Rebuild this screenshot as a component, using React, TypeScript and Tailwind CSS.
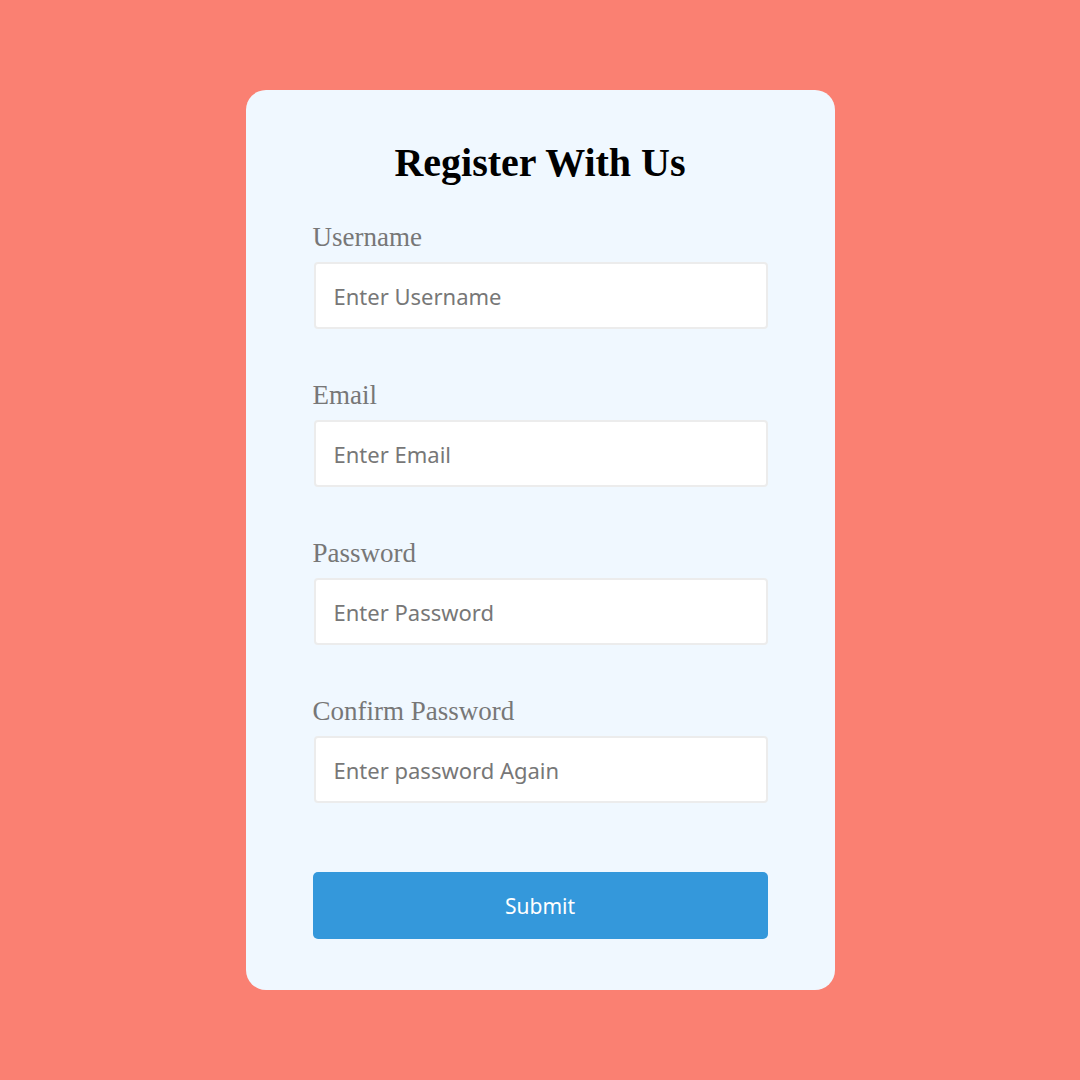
import React from "react";

const fields = [
  { label: "Username", placeholder: "Enter Username", type: "text" },
  { label: "Email", placeholder: "Enter Email", type: "email" },
  { label: "Password", placeholder: "Enter Password", type: "password" },
  { label: "Confirm Password", placeholder: "Enter password Again", type: "password" },
];

export default function App() {
  return (
    <div className="min-h-screen w-full bg-[#fa8072] flex items-center justify-center">
      <form
        className="w-[589px] bg-[#f0f8ff] rounded-[20px] px-[67px] pt-[50px] pb-[51px] flex flex-col"
        onSubmit={(e) => e.preventDefault()}
      >
        <h2 className="text-center text-[40px] leading-[46px] font-bold text-black [font-family:'Liberation_Serif','Times_New_Roman',serif]">
          Register With Us
        </h2>
        <div className="mt-[36px] flex flex-col gap-[51px]">
          {fields.map((f) => (
            <div key={f.label} className="flex flex-col">
              <label className="text-[27px] leading-[30px] text-[#777] mb-[10px] [font-family:'Liberation_Serif','Times_New_Roman',serif]">
                {f.label}
              </label>
              <input
                type={f.type}
                placeholder={f.placeholder}
                className="ml-[1px] w-[454px] h-[67px] bg-white border-2 border-[#ececec] rounded-[4px] px-[18px] text-[22px] text-[#333] placeholder:text-[#777] outline-none [font-family:'Noto_Sans',sans-serif]"
              />
            </div>
          ))}
        </div>
        <button
          type="submit"
          className="mt-[69px] h-[67px] w-full bg-[#3498db] rounded-[5px] text-white text-[21px] pt-[3px] [font-family:'Noto_Sans',sans-serif]"
        >
          Submit
        </button>
      </form>
    </div>
  );
}
